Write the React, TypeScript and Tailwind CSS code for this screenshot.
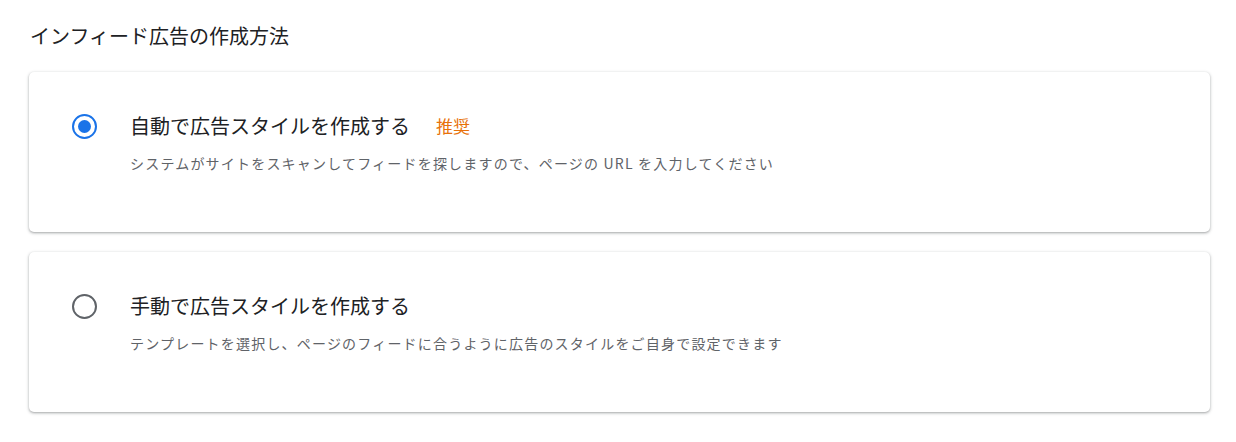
import { useState } from 'react';

const options = [
  {
    id: 'auto',
    title: '自動で広告スタイルを作成する',
    badge: '推奨',
    desc: 'システムがサイトをスキャンしてフィードを探しますので、ページの URL を入力してください',
  },
  {
    id: 'manual',
    title: '手動で広告スタイルを作成する',
    desc: 'テンプレートを選択し、ページのフィードに合うように広告のスタイルをご自身で設定できます',
  },
];

function Radio({ checked }: { checked: boolean }) {
  return (
    <span
      className={`flex h-[25px] w-[25px] shrink-0 items-center justify-center rounded-full border-[2.5px] ${
        checked ? 'border-[#1a73e8]' : 'border-[#5f6368]'
      }`}
    >
      {checked && <span className="h-[13px] w-[13px] rounded-full bg-[#1a73e8]" />}
    </span>
  );
}

export default function App() {
  const [selected, setSelected] = useState('auto');

  return (
    <div
      className="min-h-[442px] bg-white px-[29px] pt-[22px] text-[#202124]"
      style={{ fontFamily: '"Noto Sans CJK JP", "Noto Sans", sans-serif' }}
    >
      <h2 className="mb-[22px] pl-px text-[20px] font-normal leading-[28px]">インフィード広告の作成方法</h2>

      <div className="flex w-[1181px] flex-col gap-5">
        {options.map((opt) => (
          <div
            key={opt.id}
            onClick={() => setSelected(opt.id)}
            className="flex h-[160px] cursor-pointer items-start gap-[33px] rounded-[5px] bg-white pl-[43px] pt-[40px] shadow-[0_1px_2px_0_rgba(60,64,67,0.3),0_1px_3px_1px_rgba(60,64,67,0.15)]"
          >
            <div className="mt-[2px]">
              <Radio checked={selected === opt.id} />
            </div>
            <div>
              <div className="flex items-center gap-[26px]">
                <span className="text-[20px] font-normal leading-[28px]">{opt.title}</span>
                {opt.badge && (
                  <span className="text-[17px] font-normal leading-[28px] text-[#e8710a]">{opt.badge}</span>
                )}
              </div>
              <p className="mt-3 text-[14px] leading-[22px] tracking-[1.2px] text-[#5f6368]">{opt.desc}</p>
            </div>
          </div>
        ))}
      </div>
    </div>
  );
}
